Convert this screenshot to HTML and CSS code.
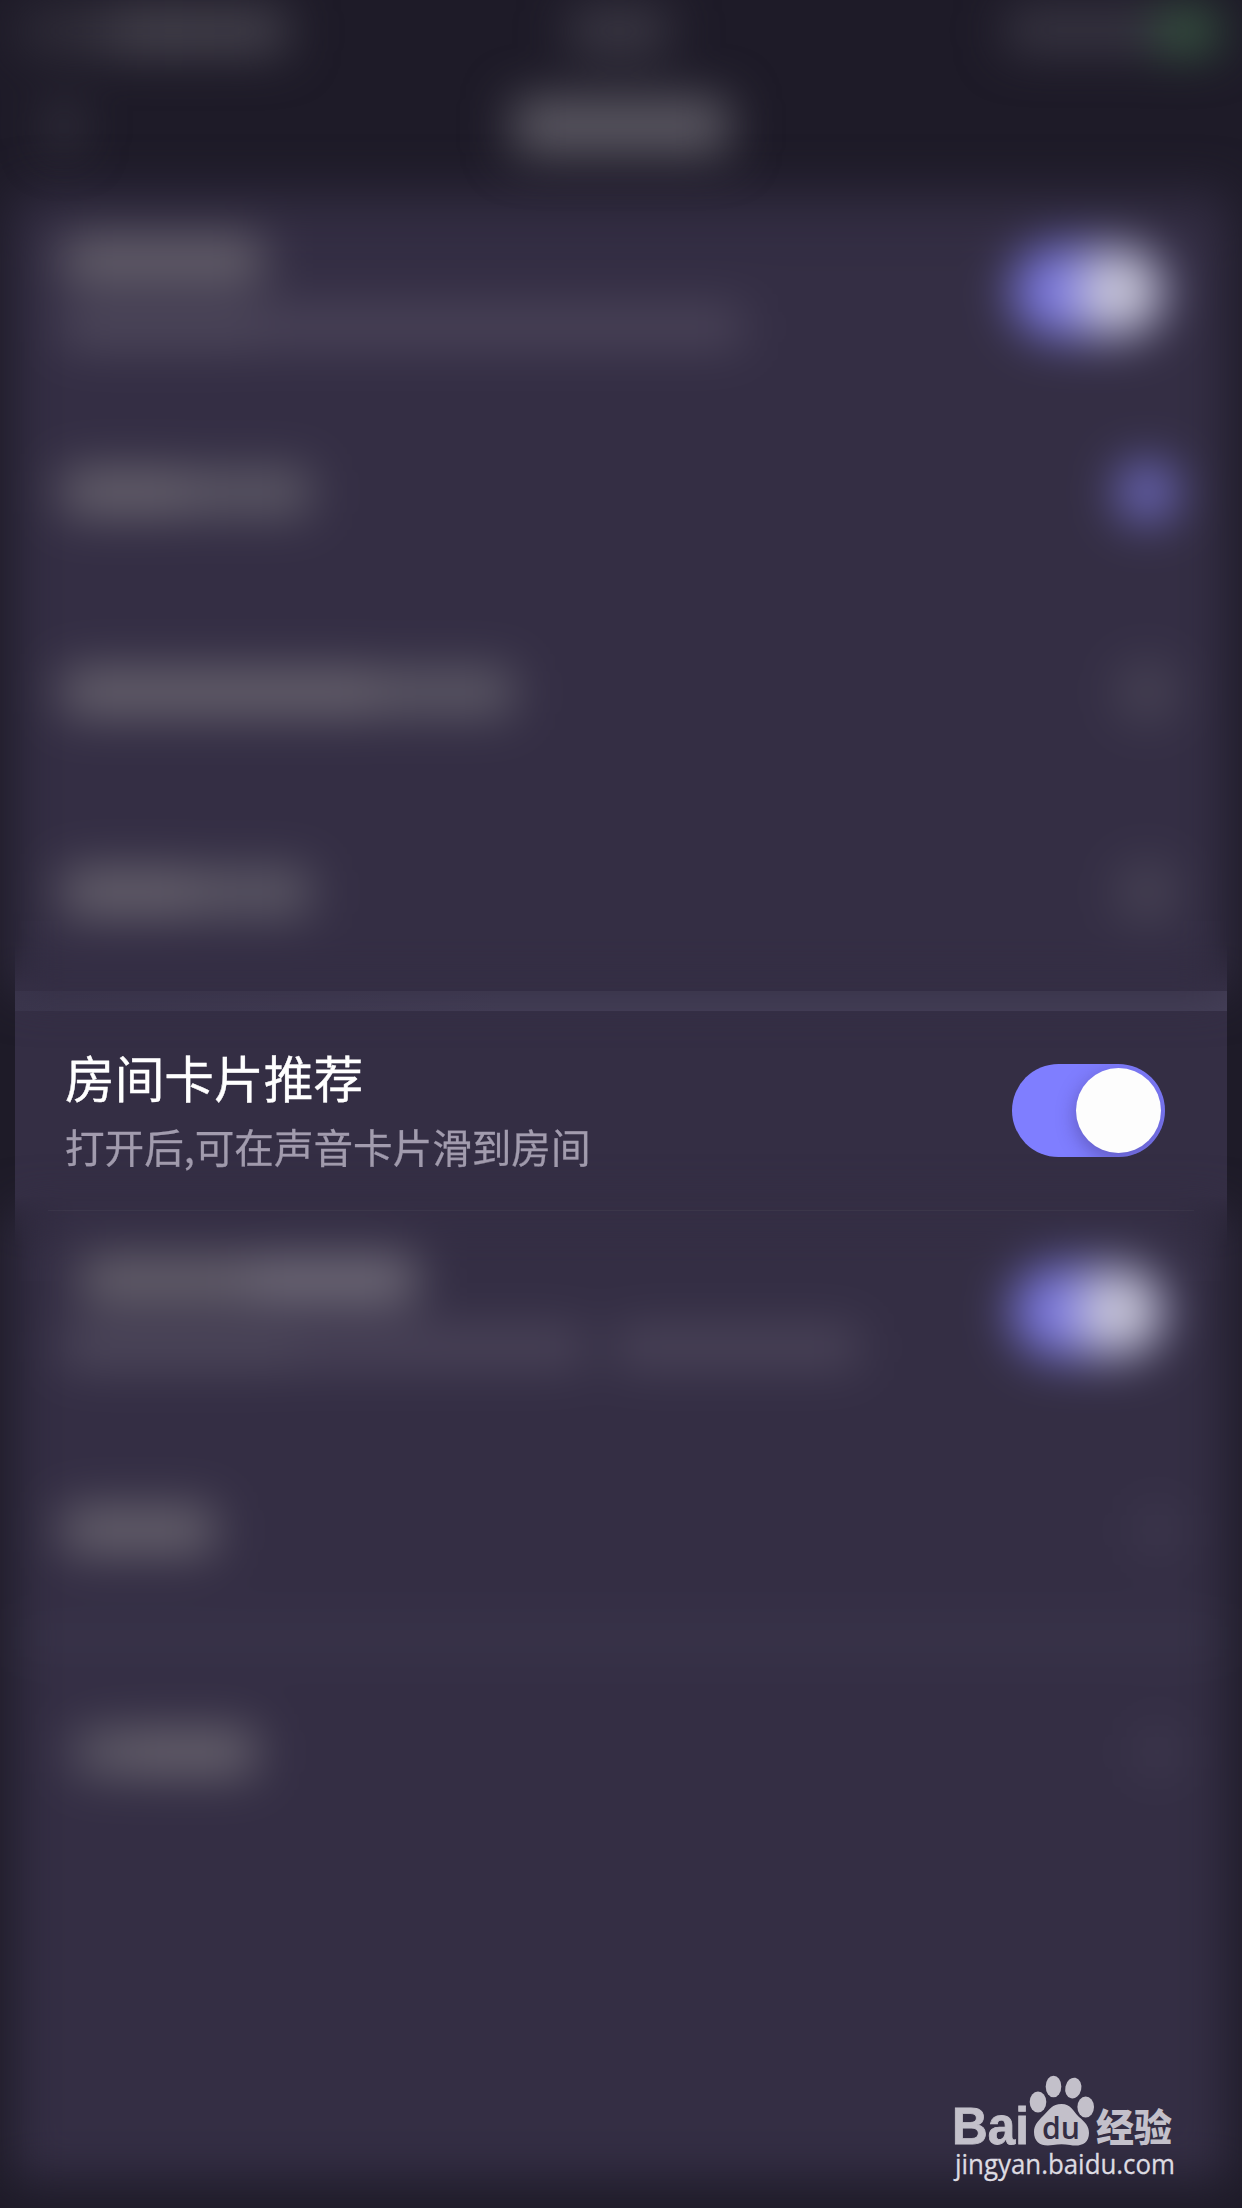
FILE: index.html
```html
<!DOCTYPE html>
<html lang="zh-CN">
<head>
<meta charset="utf-8">
<title>房间卡片推荐</title>
<link rel="stylesheet" href="styles.css">
</head>
<body>
<main class="screen">
  <header class="header soft">
    <div class="status">
      <i class="ink status-left"></i><i class="ink status-time"></i>
      <span class="status-right"><i class="ink signal"></i><i class="ink battery"></i></span>
    </div>
    <div class="navbar"><i class="ink back"></i><i class="ink nav-title"></i><i class="back-space"></i></div>
  </header>

  <section class="list list-top soft">
    <div class="row row-first">
      <div class="copy"><i class="ink label w-200"></i><div class="hint-line"><i class="ink hint hint-strong w-190"></i><i class="ink hint w-480"></i></div></div>
      <div class="toggle toggle-dim"><i class="knob"></i></div>
    </div>
    <div class="row"><div class="words"><i class="ink label w-115"></i><i class="ink label label-dim w-120"></i></div><i class="radio radio-on"></i></div>
    <div class="row"><div class="words"><i class="ink label w-310"></i><i class="ink label label-dim w-130"></i></div><i class="radio"></i></div>
    <div class="row"><div class="words"><i class="ink label w-130"></i><i class="ink label label-dim w-110"></i></div><i class="radio"></i></div>
  </section>

  <section class="focus">
    <div class="divider"></div>
    <div class="focus-row">
      <div class="focus-copy">
        <h1 class="title">房间卡片推荐</h1>
        <p class="desc">打开后,可在声音卡片滑到房间</p>
      </div>
      <div class="toggle"><i class="knob"></i></div>
    </div>
    <div class="hairline"></div>
  </section>

  <section class="list list-bottom soft">
    <div class="row row-second">
      <div class="copy"><div class="words indent"><i class="ink label w-155"></i><i class="ink label label-bright w-165"></i></div><div class="hint-line"><i class="ink hint hint-strong w-230"></i><i class="ink hint w-280 gap-wide"></i><i class="ink hint w-240"></i></div></div>
      <div class="toggle toggle-dim"><i class="knob"></i></div>
    </div>
    <div class="row row-link"><i class="ink label w-145"></i><i class="ink chevron"></i></div>
    <div class="band"></div>
    <div class="row row-link row-last"><div class="words indent-sm"><i class="ink label label-dim w-35"></i><i class="ink label w-130"></i></div><i class="ink chevron"></i></div>
  </section>

  <svg class="watermark" width="240" height="136" viewBox="950 2066 240 136" aria-label="Baidu 经验">
    <g fill="#c3c0ca">
      <text class="brand" x="952" y="2144" textLength="77" lengthAdjust="spacingAndGlyphs">Bai</text>
      <ellipse cx="1038" cy="2102" rx="8.3" ry="10.5"/>
      <ellipse cx="1053.5" cy="2086.5" rx="7.8" ry="10.8"/>
      <ellipse cx="1073.3" cy="2088" rx="8" ry="10.5" transform="rotate(12 1073 2088)"/>
      <ellipse cx="1085.7" cy="2107" rx="8.3" ry="10.5"/>
      <path d="M1061.500 2104C1071 2104 1073 2111 1079 2117C1085 2122 1089 2126 1089 2133C1089 2144 1080 2147 1070 2145C1064 2144 1059 2144 1053 2145C1042 2147 1034 2143 1034 2132C1034 2125 1038 2121 1043 2116C1050 2109 1052 2104 1061.500 2104Z"/>
      <text class="brand-cn" x="1096" y="2141" textLength="76" lengthAdjust="spacingAndGlyphs">经验</text>
    </g>
    <text class="paw-text" x="1042" y="2138.5" textLength="38" lengthAdjust="spacingAndGlyphs">du</text>
    <text class="site" x="955" y="2174" textLength="220" lengthAdjust="spacingAndGlyphs">jingyan.baidu.com</text>
  </svg>
</main>
</body>
</html>
```
FILE: styles.css
```css
* { box-sizing: border-box; }
body { margin: 0; background: #1e1b28; }
.screen {
  position: relative;
  width: 1242px;
  height: 2208px;
  overflow: hidden;
  display: flex;
  flex-direction: column;
  background: #1e1b28;
  font-family: "Noto Sans CJK SC", sans-serif;
}
.soft { filter: blur(24px); }
.ink { display: block; border-radius: 8px; flex: none; }

.header { height: 190px; flex: none; position: relative; z-index: 2; }
.status { display: grid; grid-template-columns: 1fr auto 1fr; align-items: center; height: 62px; padding: 0 24px 0 20px; }
.status-left { width: 268px; height: 46px; background: linear-gradient(90deg, #2f2c38 20%, #494650 45%, #44414c); }
.status-time { width: 100px; height: 46px; background: #3c3945; }
.status-right { display: flex; justify-content: flex-end; }
.signal { width: 150px; height: 42px; background: #3a3744; }
.battery { width: 62px; height: 44px; background: #395a43; }
.navbar { display: flex; justify-content: space-between; align-items: center; height: 128px; padding: 0 52px; }
.back, .back-space { width: 24px; height: 46px; }
.back { background: #3e3b48; }
.nav-title { width: 216px; height: 56px; background: #5d5a64; }

.list {
  flex: none;
  position: relative;
  z-index: 1;
  margin: 0 13px;
  background: #342e44;
}
.list-top { height: 801px; background: linear-gradient(rgba(52, 46, 68, 0.72), #342e44 56px); }
.row { display: flex; align-items: center; justify-content: space-between; height: 200px; padding: 0 51px 0 50px; }
.row-first { height: 202px; padding-right: 64px; }
.copy { display: flex; flex-direction: column; gap: 25px; }
.words, .hint-line { display: flex; }
.indent { padding-left: 18px; }
.indent-sm { padding-left: 12px; }
.label { height: 46px; background: #69646f; }
.label-dim { background: #5e5a67; }
.label-bright { background: #746f7c; }
.hint { height: 38px; background: #4d465b; }
.hint-strong { background: #524c5f; }
.gap-wide { margin-right: 30px; }
.w-35 { width: 45px; }
.w-110 { width: 112px; }
.w-115 { width: 128px; }
.w-120 { width: 120px; }
.w-130 { width: 136px; }
.w-145 { width: 152px; }
.w-155 { width: 165px; }
.w-165 { width: 170px; }
.w-190 { width: 200px; }
.w-200 { width: 200px; }
.w-230 { width: 236px; }
.w-240 { width: 244px; }
.w-280 { width: 286px; }
.w-310 { width: 315px; }
.w-480 { width: 480px; }
.radio { width: 62px; height: 62px; border-radius: 50%; background: #474254; }
.radio-on { background: #6d69be; }
.chevron { width: 26px; height: 40px; margin-right: 8px; background: #454055; }

.toggle {
  width: 153px;
  height: 93px;
  padding: 4px;
  display: flex;
  justify-content: flex-end;
  flex: none;
  border-radius: 47px;
  overflow: hidden;
  background: #7f7eff;
}
.knob { width: 85px; height: 85px; border-radius: 50%; background: #fdfdfd; box-shadow: 0 6px 20px rgba(50, 35, 90, 0.4); }
.toggle-dim { background: #7b78e0; }
.toggle-dim .knob { background: #c9c7d7; box-shadow: none; }

/* crisp row: extends under both soft lists, fading only at its outer corners */
.focus {
  flex: none;
  height: 360px;
  margin: -70px 15px;
  padding-top: 70px;
  background: #342e44;
  -webkit-mask-image:
    linear-gradient(transparent 20px, #000 64px, #000 275px, transparent 325px),
    linear-gradient(90deg, transparent, #000 60px, #000 calc(100% - 60px), transparent);
  mask-image:
    linear-gradient(transparent 20px, #000 64px, #000 275px, transparent 325px),
    linear-gradient(90deg, transparent, #000 60px, #000 calc(100% - 60px), transparent);
}
.divider { height: 20px; background: linear-gradient(90deg, #3b364d, #443f57 40%); }
.focus-row { display: flex; justify-content: space-between; align-items: center; height: 198px; padding: 0 62px 0 50px; }
.focus-copy { display: flex; flex-direction: column; }
.title { margin: -2px 0 0; font-size: 49.7px; line-height: 66px; font-weight: 400; color: #fff; -webkit-text-stroke: 0.4px #fff; }
.desc { margin: 7px 0 0; font-size: 39.6px; line-height: 60px; color: #a29cae; -webkit-text-stroke: 0.3px #a29cae; }
.hairline { height: 1px; margin: 1px 33px 0; background: #423d50; }

.list-bottom { height: 970px; }
.row-second { height: 200px; padding-right: 64px; }
.row-link { height: 237px; }
.band { height: 20px; margin-top: -20px; background: #3c374d; }
.row-last { height: 208px; }

.watermark { position: absolute; left: 950px; top: 2066px; z-index: 2; }
.brand { font: 700 51px "Liberation Sans", sans-serif; stroke: #c3c0ca; stroke-width: 0.8px; }
.brand-cn { font: 900 38px "Noto Sans CJK SC", sans-serif; }
.paw-text { font: 600 31px "Open Sans", sans-serif; fill: #342e44; }
.site { font: 400 28px "Open Sans", sans-serif; fill: #dddbe1; stroke: #dddbe1; stroke-width: 0.3px; }
```
